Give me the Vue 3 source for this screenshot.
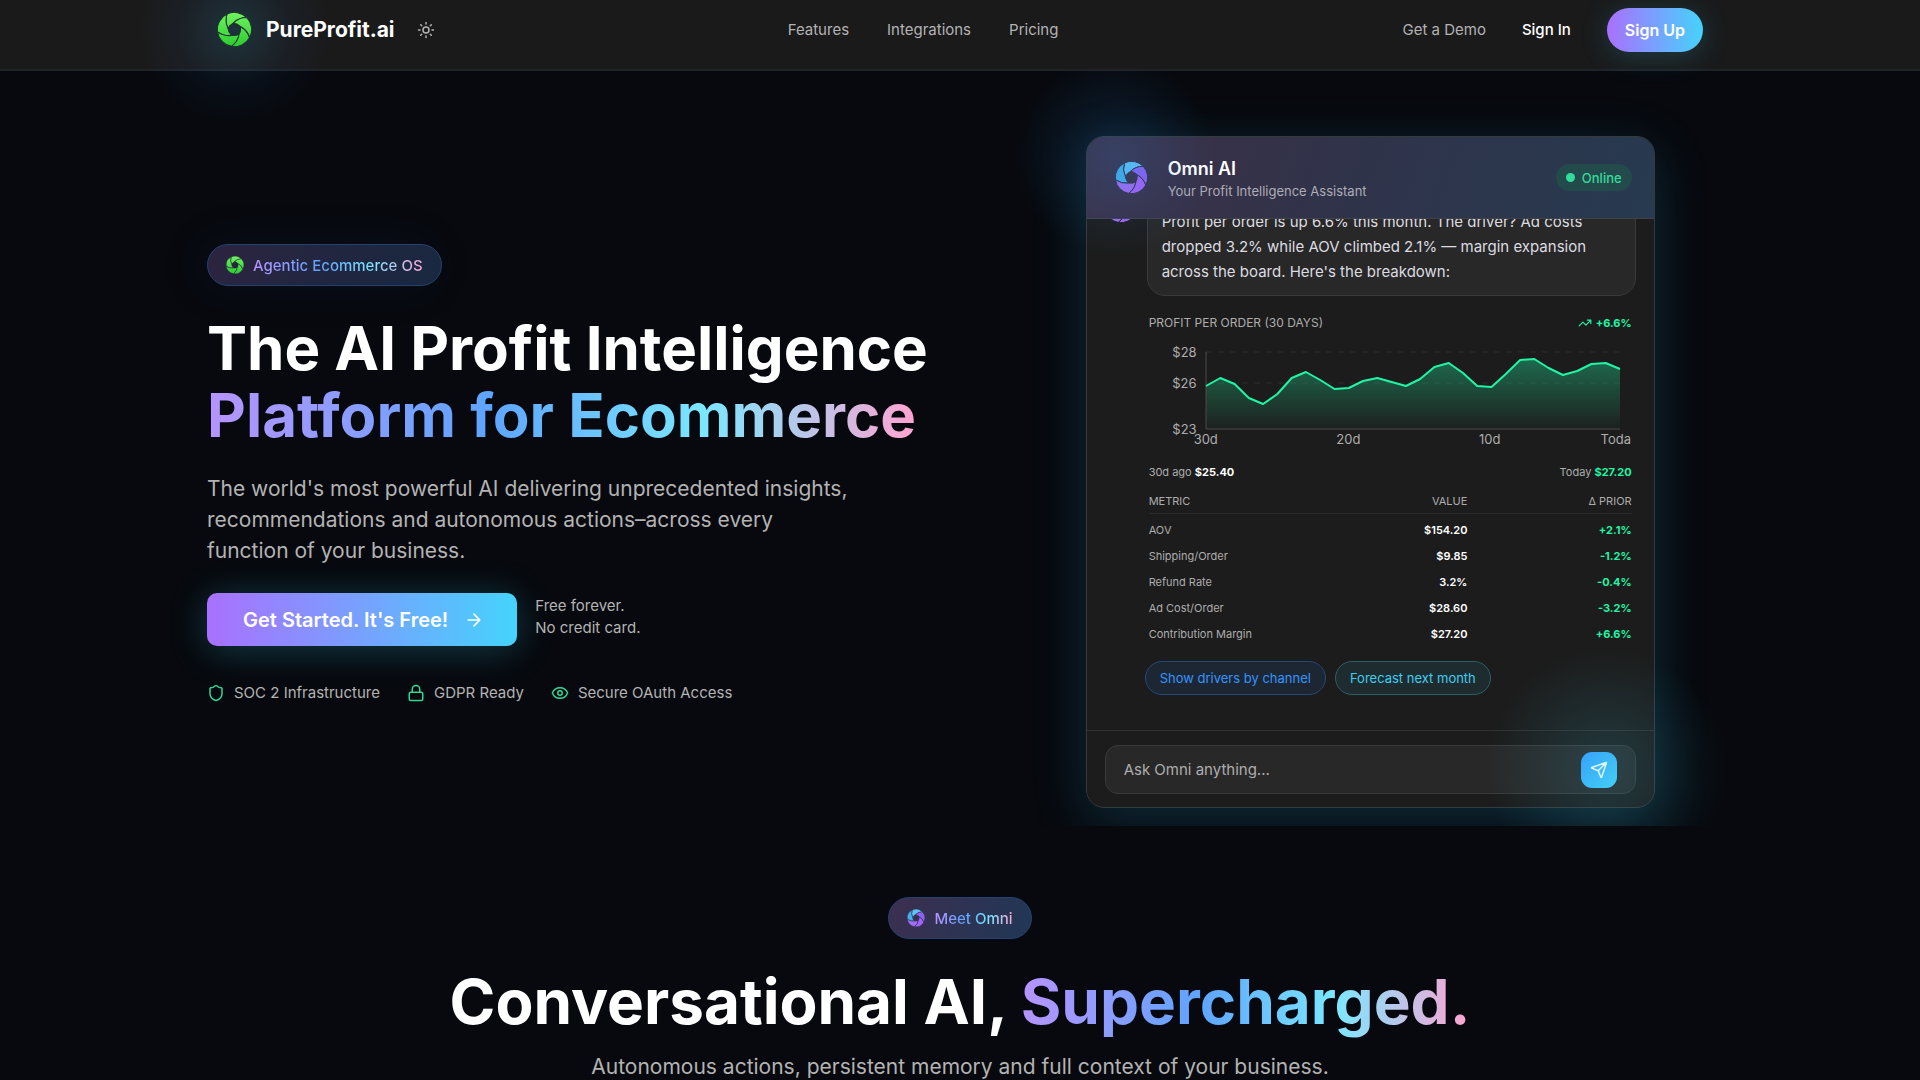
<template>
  <div class="page">
    <header class="site-header">
      <div class="header-inner">
        <div class="brand-group">
          <a href="#" class="brand">
            <svg class="brand-logo" viewBox="0 0 100 100" aria-hidden="true">
              <defs>
                <linearGradient id="green-blades" x1="0" y1="0" x2="0" y2="100" gradientUnits="userSpaceOnUse">
                  <stop offset="0" stop-color="#72f460" />
                  <stop offset="1" stop-color="#2ccb30" />
                </linearGradient>
              </defs>
              <path v-for="d in blades" :key="d" :d="d" fill="url(#green-blades)" stroke="#1d3530" stroke-width="3" />
            </svg>
            <span>PureProfit.ai</span>
          </a>
          <button type="button" class="theme-toggle" aria-label="Toggle theme">
            <svg viewBox="0 0 24 24" class="line-icon">
              <circle cx="12" cy="12" r="4" />
              <path d="M12 2v2M12 20v2M4.9 4.9l1.4 1.4M17.7 17.7l1.4 1.4M2 12h2M20 12h2M6.3 17.7l-1.4 1.4M19.1 4.9l-1.4 1.4" />
            </svg>
          </button>
        </div>
        <nav class="main-nav">
          <a v-for="item in navItems" :key="item" href="#">{{ item }}</a>
        </nav>
        <div class="account-nav">
          <a href="#">Get a Demo</a>
          <a href="#" class="sign-in">Sign In</a>
          <a href="#" class="sign-up">Sign Up</a>
        </div>
      </div>
    </header>

    <section class="hero">
      <div class="hero-inner">
        <div class="hero-copy">
          <div class="badge">
            <svg class="badge-logo" viewBox="0 0 100 100" aria-hidden="true">
              <path v-for="d in blades" :key="d" :d="d" fill="url(#green-blades)" stroke="#28283f" stroke-width="3" />
            </svg>
            <span class="rainbow">Agentic Ecommerce OS</span>
          </div>
          <h1>The AI Profit Intelligence<br /><span class="rainbow">Platform for Ecommerce</span></h1>
          <p class="lead">
            The world's most powerful AI delivering unprecedented insights, recommendations and autonomous
            actions–across every function of your business.
          </p>
          <div class="cta-row">
            <a href="#" class="cta">
              Get Started. It's Free!
              <svg viewBox="0 0 24 24" class="line-icon"><path d="M5 12h14M12 5l7 7-7 7" /></svg>
            </a>
            <p class="cta-note">Free forever.<br />No credit card.</p>
          </div>
          <ul class="trust">
            <li>
              <svg viewBox="0 0 24 24" class="line-icon">
                <path d="M20 13c0 5-3.5 7.5-7.7 9a1 1 0 0 1-.6 0C7.5 20.5 4 18 4 13V6a1 1 0 0 1 1-1c2 0 4.5-1.2 6.2-2.7a1.2 1.2 0 0 1 1.6 0C14.5 3.8 17 5 19 5a1 1 0 0 1 1 1z" />
              </svg>
              SOC 2 Infrastructure
            </li>
            <li>
              <svg viewBox="0 0 24 24" class="line-icon">
                <rect x="3" y="11" width="18" height="11" rx="2" />
                <path d="M7 11V7a5 5 0 0 1 10 0v4" />
              </svg>
              GDPR Ready
            </li>
            <li>
              <svg viewBox="0 0 24 24" class="line-icon">
                <path d="M2 12.3a1 1 0 0 1 0-.6 10.8 10.8 0 0 1 20 0 1 1 0 0 1 0 .6 10.8 10.8 0 0 1-20 0z" />
                <circle cx="12" cy="12" r="3" />
              </svg>
              Secure OAuth Access
            </li>
          </ul>
        </div>

        <div class="chat-wrap">
          <div class="chat">
            <div class="chat-header">
              <svg class="chat-logo" viewBox="0 0 100 100" aria-hidden="true">
                <path v-for="(d, i) in blades" :key="d" :d="d" :fill="omniColors[i]" stroke="#33334a" stroke-width="3" />
              </svg>
              <div class="chat-title">
                <h2>Omni AI</h2>
                <p>Your Profit Intelligence Assistant</p>
              </div>
              <span class="status"><i></i>Online</span>
            </div>

            <div class="chat-body">
              <div class="message">
                <svg class="avatar" viewBox="0 0 100 100" aria-hidden="true">
                  <path v-for="(d, i) in blades" :key="d" :d="d" :fill="omniColors[i]" stroke="#1c1c1c" stroke-width="3" />
                </svg>
                <p class="bubble">
                  Profit per order is up 6.6% this month. The driver? Ad costs dropped 3.2% while AOV climbed 2.1% —
                  margin expansion across the board. Here's the breakdown:
                </p>
              </div>

              <div class="report">
                <div class="report-head">
                  <span>PROFIT PER ORDER (30 DAYS)</span>
                  <strong class="up">
                    <svg viewBox="0 0 24 24" class="line-icon"><path d="M22 7l-8.5 8.5-5-5L2 17M16 7h6v6" /></svg>
                    +6.6%
                  </strong>
                </div>
                <div class="chart">
                  <div class="y-labels"><span>$28</span><span>$26</span><span>$23</span></div>
                  <svg class="plot" viewBox="0 0 414 77" preserveAspectRatio="none">
                    <defs>
                      <linearGradient id="profit-fill" x1="0" y1="0" x2="0" y2="1">
                        <stop offset="0" stop-color="#20f5a5" stop-opacity="0.36" />
                        <stop offset="1" stop-color="#20f5a5" stop-opacity="0.02" />
                      </linearGradient>
                    </defs>
                    <path class="grid-line" d="M0 0H414M0 31H414" />
                    <path :d="areaPath" fill="url(#profit-fill)" />
                    <path class="axis" d="M0 0V77H414" />
                    <path class="profit-line" :d="linePath" />
                  </svg>
                  <div class="x-labels"><span>30d</span><span>20d</span><span>10d</span><span>Toda</span></div>
                </div>
                <div class="range">
                  <span>30d ago <strong>$25.40</strong></span>
                  <span>Today <strong class="up">$27.20</strong></span>
                </div>
                <table>
                  <thead>
                    <tr><th>METRIC</th><th>VALUE</th><th>Δ PRIOR</th></tr>
                  </thead>
                  <tbody>
                    <tr v-for="m in metrics" :key="m.name">
                      <td>{{ m.name }}</td>
                      <td>{{ m.value }}</td>
                      <td>{{ m.prior }}</td>
                    </tr>
                  </tbody>
                </table>
              </div>

              <div class="suggestions">
                <button type="button" class="chip">Show drivers by channel</button>
                <button type="button" class="chip chip-cyan">Forecast next month</button>
              </div>
            </div>

            <form class="composer" @submit.prevent>
              <div class="composer-box">
                <input v-model="question" type="text" placeholder="Ask Omni anything..." aria-label="Ask Omni anything" />
                <button type="submit" aria-label="Send">
                  <svg viewBox="0 0 24 24" class="line-icon">
                    <path d="M14.5 21.7a.5.5 0 0 0 .9 0l6.5-19a.5.5 0 0 0-.6-.6l-19 6.5a.5.5 0 0 0 0 .9l7.9 3.2a2 2 0 0 1 1.1 1.1zM21.9 2.1L10.9 13.1" />
                  </svg>
                </button>
              </div>
            </form>
          </div>
        </div>
      </div>
    </section>

    <section class="meet">
      <div class="badge badge-strong">
        <svg class="badge-logo" viewBox="0 0 100 100" aria-hidden="true">
          <path v-for="(d, i) in blades" :key="d" :d="d" :fill="omniColors[i]" stroke="#2f2f4d" stroke-width="3" />
        </svg>
        <span class="rainbow">Meet Omni</span>
      </div>
      <h2>Conversational AI, <span class="rainbow">Supercharged.</span></h2>
      <p>Autonomous actions, persistent memory and full context of your business.</p>
    </section>
  </div>
</template>

<script setup>
import { ref } from 'vue'

const question = ref('')

const navItems = ['Features', 'Integrations', 'Pricing']

const metrics = [
  { name: 'AOV', value: '$154.20', prior: '+2.1%' },
  { name: 'Shipping/Order', value: '$9.85', prior: '-1.2%' },
  { name: 'Refund Rate', value: '3.2%', prior: '-0.4%' },
  { name: 'Ad Cost/Order', value: '$28.60', prior: '-3.2%' },
  { name: 'Contribution Margin', value: '$27.20', prior: '+6.6%' },
]

// aperture logo: five blades, counter-clockwise from the top one
const omniColors = ['#5fc3f7', '#45afec', '#9f6df6', '#a462fb', '#8a62f4']

const polar = (radius, angle) => {
  const rad = (angle * Math.PI) / 180
  return `${(50 + radius * Math.cos(rad)).toFixed(2)} ${(50 - radius * Math.sin(rad)).toFixed(2)}`
}

const blades = [0, 72, 144, 216, 288].map(
  (a) =>
    `M${polar(49, 44 + a)}A49 49 0 0 0 ${polar(49, 116 + a)}` +
    `Q${polar(36, 142 + a)} ${polar(19, 170 + a)}` +
    `Q${polar(19, 134 + a)} ${polar(19, 98 + a)}Q${polar(36, 70 + a)} ${polar(49, 44 + a)}Z`,
)

// distance below the $28 line, one value per day
const profit = [
  34, 26, 32, 46, 52, 42, 26, 20, 28, 37, 36, 29, 26, 30, 34, 27, 15, 11, 21, 34, 35, 22, 8, 7, 16, 23, 19, 12, 11, 17,
]
const linePath = 'M' + profit.map((y, i) => `${((i * 414) / 29).toFixed(1)} ${y}`).join('L')
const areaPath = `${linePath}V77H0Z`
</script>

<style>
body {
  background: #07090e;
}
</style>

<style scoped>
* { box-sizing: border-box; margin: 0; padding: 0; }
.page { height: 100vh; overflow: hidden; background: #07090e; color: #fff; font-family: Inter, "Liberation Sans", sans-serif; font-size: 15px; }
a { color: inherit; text-decoration: none; }
button { font-family: inherit; cursor: pointer; }
.line-icon { fill: none; stroke: currentColor; stroke-width: 2; stroke-linecap: round; stroke-linejoin: round; display: block; }
.rainbow { background: linear-gradient(90deg, #b794ff 0%, #5ea5ff 40%, #7be7ff 70%, #ffa3d1 100%); background-clip: text; -webkit-background-clip: text; color: transparent; }

.site-header { position: relative; z-index: 2; height: 71px; background: #1a1a1b; border-bottom: 2px solid #20242a; }
.header-inner { max-width: 1486px; height: 59px; margin: 0 auto; display: flex; align-items: center; justify-content: space-between; color: #b3b3b3; }
.brand-group, .brand, .main-nav, .account-nav { display: flex; align-items: center; }
.brand-group { position: relative; gap: 13px; }
.brand-group::before { content: ""; position: absolute; left: -78px; top: -77px; width: 190px; height: 190px; background: radial-gradient(closest-side, rgba(50, 150, 190, .2), rgba(40, 110, 190, .06) 60%, transparent); pointer-events: none; }
.brand { position: relative; gap: 14px; color: #fff; font-size: 21px; font-weight: 700; }
.brand-logo { width: 35px; height: 35px; }
.theme-toggle { width: 36px; height: 36px; border: 0; background: none; color: #b3b3b3; display: grid; place-items: center; }
.theme-toggle svg { width: 18px; height: 18px; }
.main-nav { gap: 38px; }
.account-nav { gap: 36px; }
.sign-in { color: #fff; font-weight: 500; }
.sign-up { height: 44px; padding: 0 18px; border-radius: 22px; line-height: 44px; background: linear-gradient(90deg, #a970ff, #45d3fc); color: #fff; font-size: 16px; font-weight: 600; box-shadow: 0 4px 28px rgba(50, 190, 220, .22); }

.hero { position: relative; overflow: hidden; padding: 65px 40px 18px; }
.hero-inner { max-width: 1506px; margin: 0 auto; display: grid; grid-template-columns: minmax(0, 11fr) minmax(0, 10fr); column-gap: 66px; align-items: center; }
.hero-copy { padding-top: 5px; }
.badge { display: inline-flex; align-items: center; gap: 9px; height: 42px; padding: 0 18px; border: 1px solid #24426f; border-radius: 21px; background: linear-gradient(120deg, #2c2440, #182840); font-size: 15px; font-weight: 500; }
.badge-strong { background: linear-gradient(120deg, #3d2f50, #203756); }
.badge-logo { width: 18px; height: 18px; }
.hero-copy .badge { box-shadow: -8px 0 48px rgba(40, 80, 160, .1); }
h1 { margin-top: 29px; font-size: 60px; line-height: 67px; font-weight: 700; white-space: nowrap; }
h1 .rainbow { display: inline-block; }
.lead { max-width: 648px; margin-top: 24px; color: #b3b3b3; font-size: 21px; line-height: 31px; }
.cta-row { display: flex; align-items: center; gap: 18px; margin-top: 27px; }
.cta { display: flex; align-items: center; gap: 16px; height: 53px; padding: 0 33px 0 36px; border-radius: 10px; background: linear-gradient(90deg, #a970ff, #45d3fc); font-size: 20px; font-weight: 600; box-shadow: 0 4px 36px rgba(50, 190, 220, .28); }
.cta svg { width: 20px; height: 20px; }
.cta-note { color: #b3b3b3; line-height: 22px; padding-bottom: 6px; }
.trust { list-style: none; display: flex; gap: 27px; margin-top: 35px; color: #b3b3b3; }
.trust li { display: flex; align-items: center; gap: 9px; line-height: 24px; }
.trust svg { width: 18px; height: 18px; color: #2fd795; }

.chat-wrap { position: relative; width: 100%; max-width: 569px; margin: 0 auto; border-radius: 18px; box-shadow: 0 14px 54px rgba(35, 150, 190, .24); }
.chat-wrap::before { content: ""; position: absolute; z-index: 1; left: -72px; top: -80px; width: 200px; height: 200px; background: radial-gradient(closest-side, rgba(40, 130, 210, .2), transparent); pointer-events: none; }
.chat-wrap::after { content: ""; position: absolute; right: -72px; bottom: -80px; width: 240px; height: 240px; background: radial-gradient(closest-side, rgba(60, 190, 220, .18), transparent); pointer-events: none; }
.chat { position: relative; height: 672px; display: flex; flex-direction: column; border: 1px solid #353a3d; border-radius: 18px; overflow: hidden; background: #1c1c1c; }
.chat-header { flex: none; display: flex; align-items: center; gap: 20px; height: 82px; padding: 0 22px 0 28px; border-bottom: 1px solid #404249; background: linear-gradient(110deg, #3c3048, #30334a 45%, #273a50); }
.chat-logo { width: 33px; height: 33px; }
.chat-title { flex: 1; padding-top: 4px; }
.chat-title h2 { font-size: 18px; line-height: 22px; font-weight: 600; }
.chat-title p { color: #adadb4; font-size: 13px; line-height: 22px; }
.status { display: flex; align-items: center; gap: 7px; height: 27px; padding: 0 10px; border-radius: 14px; background: #234b4c; color: #32dc9a; font-size: 13px; font-weight: 500; }
.status i { width: 9px; height: 9px; border-radius: 50%; background: #32dc9a; }

.chat-body { flex: 1; min-height: 0; display: flex; flex-direction: column; justify-content: flex-end; overflow: hidden; padding: 0 18px 35px; }
.message { display: flex; gap: 10px; align-items: flex-start; }
.avatar { flex: none; width: 32px; height: 32px; margin-top: -4px; }
.bubble { flex: 1; padding: 13px 14px 11px; border: 1px solid #3a3a3a; border-radius: 18px; background: #282828; color: #dcdce0; font-size: 15px; line-height: 25px; }
.report { margin: 18px 4px 0 44px; color: #adadad; font-size: 11px; }
.report-head { display: flex; justify-content: space-between; align-items: center; font-size: 12px; line-height: 18px; }
.report-head strong { display: flex; align-items: center; gap: 4px; font-size: 11px; }
.report-head svg { width: 14px; height: 14px; }
.up { color: #20f5a5; font-weight: 700; }
.chart { display: grid; grid-template-columns: 48px 1fr; column-gap: 9px; padding-right: 12px; margin-top: 20px; font-size: 13px; }
.y-labels { display: grid; grid-template-rows: 31px 46px 0; text-align: right; line-height: 0; }
.plot { width: 100%; height: 77px; overflow: visible; }
.plot path { vector-effect: non-scaling-stroke; }
.grid-line { fill: none; stroke: #2c2c2c; stroke-width: 1; stroke-dasharray: 6 6; }
.axis { fill: none; stroke: #4a4a4a; stroke-width: 1; }
.profit-line { fill: none; stroke: #20f5a5; stroke-width: 2; stroke-linejoin: round; }
.x-labels { grid-column: 2; display: grid; grid-template-columns: 143fr 143fr 122fr 31px; margin: 2px -12px 0 -12px; line-height: 16px; }
.range { display: flex; justify-content: space-between; margin-top: 16px; line-height: 18px; }
.range strong { font-weight: 700; }
.range strong:not(.up) { color: #fff; }
table { width: 100%; margin-top: 8px; border-collapse: collapse; table-layout: fixed; }
th { height: 25px; border-bottom: 1px solid #2b2b2b; font-weight: 400; text-align: left; }
td { height: 26px; }
tbody::before { content: ""; display: block; height: 3px; }
th:nth-child(n + 2), td:nth-child(n + 2) { text-align: right; }
th:first-child { width: 40%; }
th:nth-child(2) { width: 26%; }
td:nth-child(2) { color: #fff; font-weight: 600; }
td:nth-child(3) { color: #20f5a5; font-weight: 700; }
.suggestions { display: flex; gap: 9px; margin: 14px 0 0 40px; }
.chip { height: 34px; padding: 0 14px; border: 1px solid #25477a; border-radius: 17px; background: #1d2733; color: #3294ff; font-size: 13px; }
.chip-cyan { border-color: #286066; background: #1f2c2f; color: #3ccff0; }

.composer { flex: none; padding: 14px 18px 13px; border-top: 1px solid #303030; }
.composer-box { display: flex; align-items: center; height: 49px; padding: 0 18px; border: 1px solid #3a3a3a; border-radius: 13px; background: #282828; }
.composer input { flex: 1; min-width: 0; border: 0; outline: 0; background: none; color: #fff; font-family: inherit; font-size: 15px; }
.composer input::placeholder { color: #adadad; opacity: 1; }
.composer button { width: 36px; height: 36px; border: 0; border-radius: 11px; background: linear-gradient(135deg, #359dff, #45d3fc); color: #fff; display: grid; place-items: center; }
.composer button svg { width: 18px; height: 18px; }

.meet { padding: 71px 40px 0; text-align: center; }
.meet h2 { margin-top: 29px; font-size: 62px; line-height: 67px; font-weight: 700; }
.meet p { margin-top: 16px; color: #b3b3b3; font-size: 21px; line-height: 31px; }
</style>
